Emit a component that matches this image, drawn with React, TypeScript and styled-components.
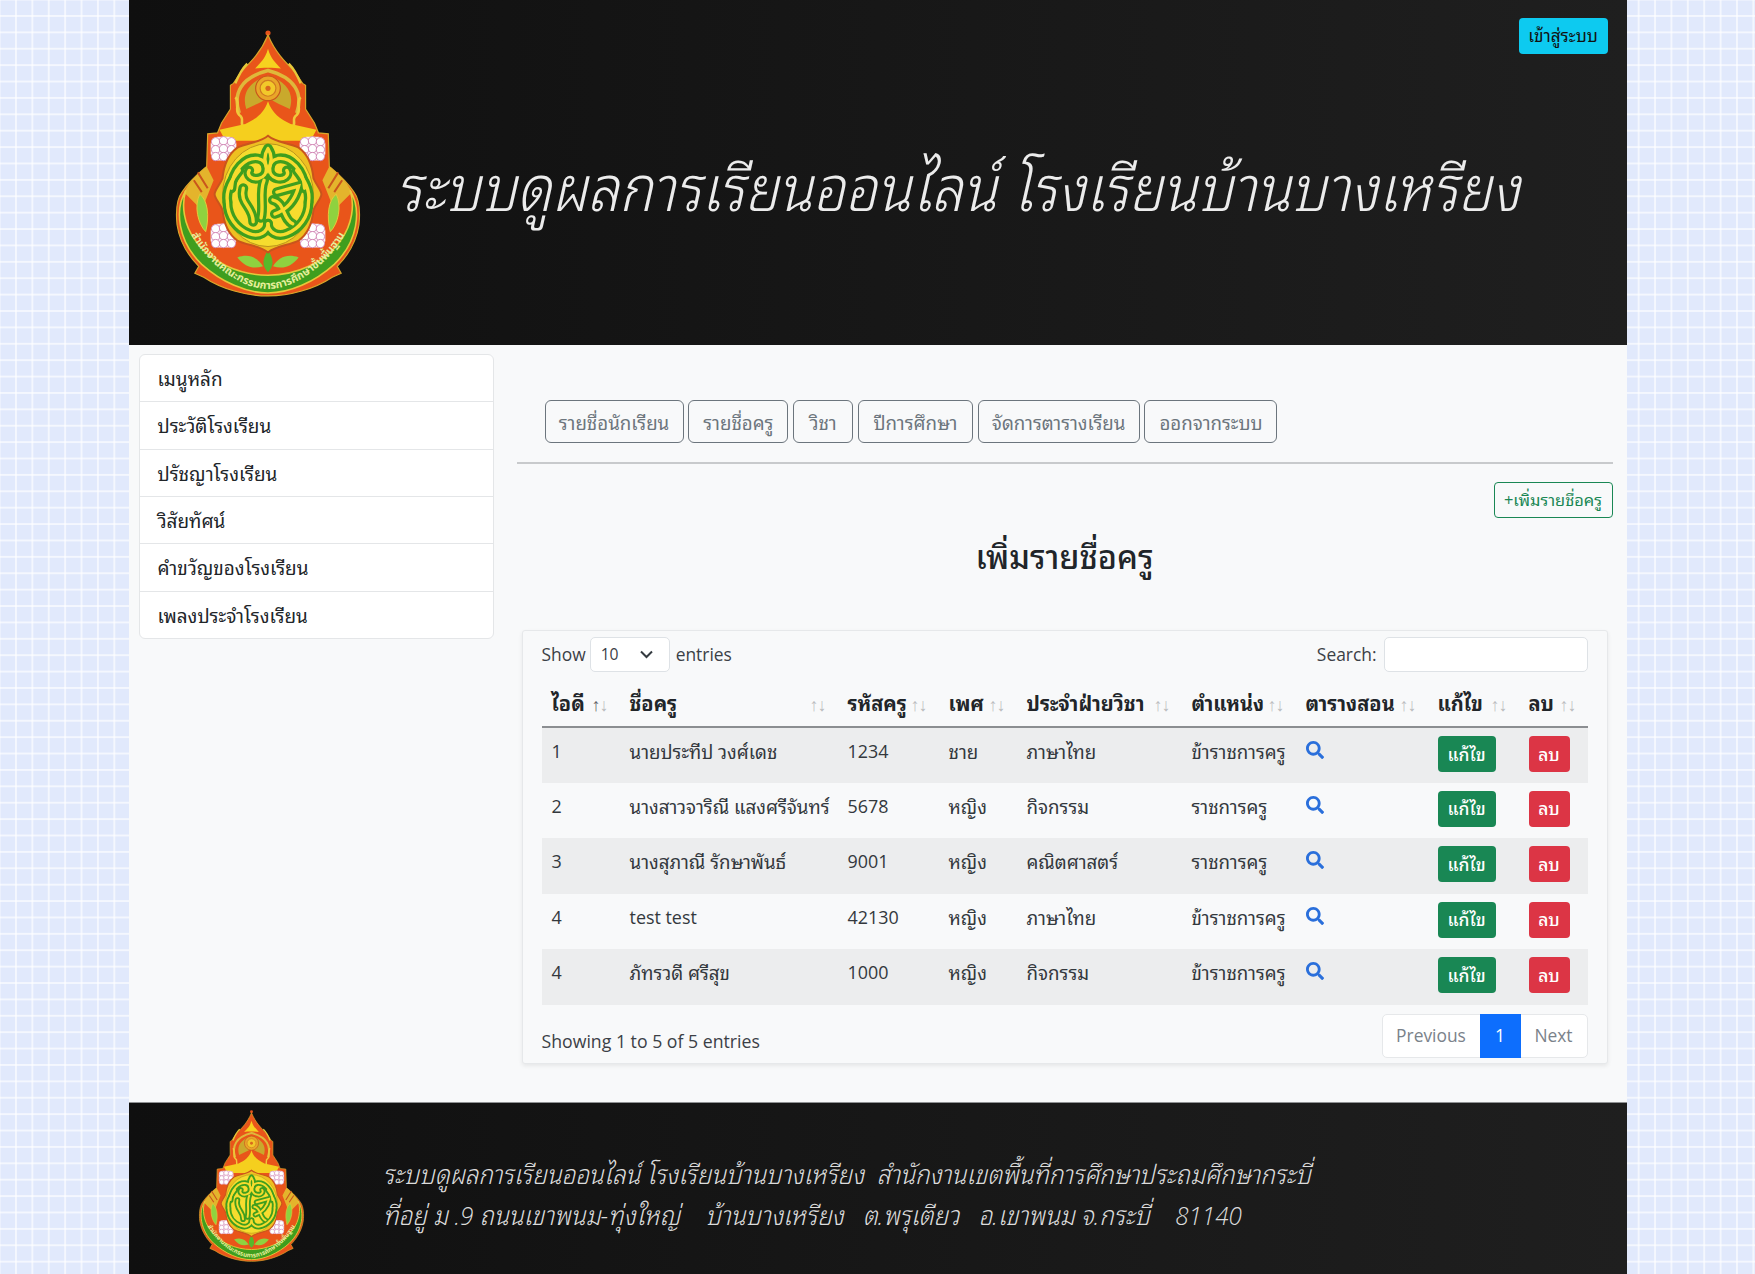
import React from "react";
import styled, { createGlobalStyle } from "styled-components";
import { FaSearch } from "react-icons/fa";

const Global = createGlobalStyle`
  html, body { margin: 0; padding: 0; }
  body {
    background-color: #e1e9fc;
    background-image:
      linear-gradient(to right, rgba(255,255,255,.62) 1.5px, transparent 1.5px),
      linear-gradient(to bottom, rgba(255,255,255,.62) 1.5px, transparent 1.5px);
    background-size: 16.4px 16.4px;
    background-position: 15px 15px;
    font-family: "Open Sans", "Noto Sans Thai Looped", Tahoma, Loma, Garuda, "Noto Sans", "Noto Sans Thai", sans-serif;
    font-size: 17.9px;
    line-height: 1.5;
    color: #212529;
  }
  * { box-sizing: border-box; }
`;

const Page = styled.div`
  width: 1498px;
  height: 1274px;
  margin: 0 auto;
  background: #f8f9fa;
  display: flex;
  flex-direction: column;
  overflow: hidden;
`;

const Banner = styled.header`
  position: relative;
  height: 345px;
  flex: none;
  background: linear-gradient(to right, #0f0f0f, #1f1f1f);
  display: flex;
  align-items: flex-start;
  padding: 30px 0 0 45px;
`;

const BannerTitle = styled.div`
  margin: 113px 0 0 34px;
  font-size: 63px;
  font-weight: 300;
  font-style: italic;
  line-height: 1.4;
  color: #ececec;
  white-space: nowrap;
  transform: scaleX(0.9);
  transform-origin: left center;
`;

const LoginButton = styled.button`
  position: absolute;
  top: 18px;
  right: 19px;
  width: 89px;
  height: 36px;
  padding: 0;
  border: 0;
  border-radius: 4px;
  background: #0dcaf0;
  color: #111;
  font: inherit;
  font-size: 17.2px;
`;

const LogoSvg = styled.svg<{ $w: number }>`
  flex: none;
  display: block;
  width: ${(p) => p.$w}px;
  height: ${(p) => p.$w * 1.42}px;
`;

const Main = styled.main`
  flex: 1;
  display: flex;
  padding: 9px 14px 0 10px;
  gap: 23px;
`;

const Menu = styled.nav`
  width: 355px;
  height: 285px;
  flex: none;
  background: #fff;
  border: 1px solid #e4e6e8;
  border-radius: 6px;
  display: flex;
  flex-direction: column;
`;

const MenuItem = styled.a`
  flex: 1;
  display: flex;
  align-items: center;
  padding: 2px 18px 0;
  color: #212529;
  font-size: 18.9px;
  border-bottom: 1px solid #e4e6e8;
  &:last-child { border-bottom: 0; }
`;

const Content = styled.section`
  flex: 1;
  display: flex;
  flex-direction: column;
  padding-top: 46px;
`;

const NavRow = styled.div`
  display: flex;
  gap: 4.8px;
  padding-left: 28px;
`;

const NavButton = styled.button<{ $w: number }>`
  width: ${(p) => p.$w}px;
  height: 43px;
  padding: 4px 0 0;
  background: transparent;
  border: 1px solid #6c757d;
  border-radius: 6px;
  color: #6c757d;
  font: inherit;
  font-size: 18.7px;
  white-space: nowrap;
`;

const Rule = styled.div`
  height: 2px;
  margin-top: 19px;
  background: #c8cacc;
`;

const AddRow = styled.div`
  display: flex;
  justify-content: flex-end;
  margin-top: 18px;
`;

const AddButton = styled.button`
  width: 119px;
  height: 36px;
  padding: 0;
  background: transparent;
  border: 1px solid #198754;
  border-radius: 4px;
  color: #198754;
  font: inherit;
  font-size: 16.4px;
  white-space: nowrap;
`;

const Title = styled.h3`
  margin: 15px 0 0;
  height: 97px;
  font-size: 32.4px;
  font-weight: 500;
  line-height: 46px;
  text-align: center;
  color: #212529;
`;

const Card = styled.div`
  margin: 0 5px 0 5px;
  height: 434px;
  padding: 6px 19px 0 19px;
  background: #f8f9fa;
  border: 1px solid #e6e8ea;
  border-radius: 3px;
  box-shadow: 0 2px 4px rgba(0,0,0,.075);
`;

const Controls = styled.div`
  display: flex;
  justify-content: space-between;
  align-items: center;
  height: 35px;
`;

const Label = styled.label`
  display: flex;
  align-items: center;
  gap: 4px;
  font-size: 17.4px;
  color: #3b4046;
`;

const SelectBox = styled.div`
  width: 80px;
  height: 35px;
  margin-right: 2px;
  display: flex;
  align-items: center;
  justify-content: space-between;
  padding: 0 16px 0 10px;
  background: #fff;
  border: 1px solid #dee2e6;
  border-radius: 5px;
  font-size: 15.7px;
`;

const SearchBox = styled.input`
  width: 204px;
  height: 35px;
  margin-left: 3px;
  background: #fff;
  border: 1px solid #dee2e6;
  border-radius: 5px;
`;

const Table = styled.table`
  width: 1046px;
  margin-top: 10px;
  table-layout: fixed;
  border-collapse: collapse;
`;

const Col = styled.col<{ $w: number }>`
  width: ${(p) => p.$w}px;
`;

const Th = styled.th<{ $sorted?: boolean }>`
  position: relative;
  height: 45px;
  padding: 0 9px 2px 10px;
  text-align: left;
  font-size: 20px;
  line-height: 27px;
  font-weight: 700;
  border-bottom: 2px solid #8b8e91;
  white-space: nowrap;
  &::before, &::after {
    position: absolute;
    top: 9px;
    font-size: 17.9px;
    font-weight: 400;
  }
  &::before {
    content: "↑";
    right: 19px;
    opacity: ${(p) => (p.$sorted ? 0.7 : 0.28)};
  }
  &::after {
    content: "↓";
    right: 11px;
    opacity: 0.28;
  }
`;

const Tr = styled.tr<{ $striped: boolean }>`
  background: ${(p) => (p.$striped ? "#ecedee" : "transparent")};
`;

const Td = styled.td<{ $thai?: boolean }>`
  height: 55.5px;
  padding: 10px 9px 0 10px;
  vertical-align: top;
  color: #33383d;
  font-size: ${(p) => (p.$thai ? "18.7px" : "17.9px")};
  line-height: 27px;
  white-space: nowrap;
`;

const SearchLink = styled.a`
  display: inline-flex;
  color: #2a6fdb;
  font-size: 18px;
  padding-top: 3px;
`;

const ActionButton = styled.button<{ $bg: string; $w: number }>`
  width: ${(p) => p.$w}px;
  height: 36px;
  padding: 0;
  border: 0;
  border-radius: 4px;
  background: ${(p) => p.$bg};
  color: #fff;
  font: inherit;
  font-size: 17.5px;
  font-weight: 500;
  margin-top: -2px;
  display: block;
`;

const TableFooter = styled.div`
  display: flex;
  justify-content: space-between;
  align-items: flex-start;
  margin-top: 9px;
`;

const Info = styled.div`
  padding-top: 14px;
  font-size: 17.7px;
  color: #3b4046;
`;

const Pager = styled.div`
  display: flex;
  height: 44px;
  background: #fff;
  border: 1px solid #e6e8ea;
  border-radius: 5px;
`;

const PageLink = styled.div<{ $active?: boolean; $w: number }>`
  width: ${(p) => p.$w}px;
  margin: ${(p) => (p.$active ? "-1px 0" : "0")};
  display: flex;
  align-items: center;
  justify-content: center;
  font-size: 17.4px;
  background: ${(p) => (p.$active ? "#0d6efd" : "transparent")};
  color: ${(p) => (p.$active ? "#fff" : "#7a828a")};
`;

const Footer = styled.footer`
  flex: none;
  height: 172px;
  background: linear-gradient(to right, #0f0f0f, #1f1f1f);
  border-top: 1px solid #8f9193;
  display: flex;
  align-items: flex-start;
  padding: 7px 0 0 69px;
`;

const FooterText = styled.div`
  margin: 44px 0 0 78px;
  font-size: 26.5px;
  font-weight: 300;
  font-style: italic;
  line-height: 41px;
  color: #dcdcdc;
  white-space: pre;
  transform: scaleX(0.916);
  transform-origin: left center;
`;

function Lotus({ x, y }: { x: number; y: number }) {
  return (
    <g transform={`translate(${x} ${y})`}>
      <rect x="-13" y="-12" width="26" height="24" rx="7" fill="#f8eef6" />
      {[[-8, -7], [0, -8], [8, -7], [-8, 1], [0, 0], [8, 1], [-8, 8], [0, 8], [8, 8]].map(([a, b], i) => (
        <circle key={i} cx={a} cy={b} r="4.2" fill="#fff" stroke="#cf7fb0" strokeWidth="0.9" />
      ))}
    </g>
  );
}

function Emblem({ w, pathId }: { w: number; pathId: string }) {
  const knot = [
    "M70 168C71 150 84 136 97 138C108 140 108 156 98 158C91 160 85 155 88 150",
    "M144 168C143 150 130 136 117 138C106 140 106 156 116 158C123 160 129 155 126 150",
    "M66 182C66 197 75 209 88 214C98 218 107 212 107 204",
    "M148 182C148 197 139 209 126 214C116 218 107 212 107 204",
    "M82 168C78 184 92 186 92 202",
    "M103 160C98 172 103 186 100 198",
    "M116 172L138 166C134 182 126 190 114 194",
    "M112 180C124 182 122 200 132 204",
    "M78 150C70 160 64 170 66 182",
    "M136 150C144 160 150 170 148 182",
    "M107 128C103 134 103 142 107 150C111 142 111 134 107 128",
  ];
  return (
    <LogoSvg $w={w} viewBox="14 8 186 270" aria-hidden="true">
      <defs>
        <path id={pathId} d="M21 192C26 226 70 270 107 270C144 270 188 226 193 192" />
      </defs>
      <circle cx="107" cy="11" r="2.6" fill="#e8531a" />
      <path
        d="M107 13C100 30 90 40 80 50L72 62L69 64L69 88L60 102L56 112L46 113L45 146C38 152 28 160 20 172C14 180 14 195 15 205C18 225 30 240 37 247L33 254L42 258C60 270 85 277 107 277C129 277 154 270 172 258L181 254L177 247C184 240 196 225 199 205C200 195 200 180 194 172C186 160 176 152 169 146L168 113L158 112L154 102L145 88L145 64L142 62L134 50C124 40 114 30 107 13Z"
        fill="#e9551a"
        stroke="#d8a72a"
        strokeWidth="1.2"
      />
      <path d="M45 146C38 152 28 160 22 172L40 190L52 160Z" fill="#e4b42c" />
      <path d="M169 146C176 152 186 160 192 172L174 190L162 160Z" fill="#e4b42c" />
      <path d="M32 160L40 172M36 152L46 168M182 160L174 172M178 152L168 168" stroke="#c9551c" strokeWidth="2" />
      <path
        d="M24 170C12 190 16 222 40 245C60 263 85 274 107 274C129 274 154 263 174 245C198 222 202 190 190 170C195 185 192 205 181 220C166 243 135 256 107 256C79 256 48 243 33 220C22 205 19 185 24 170Z"
        fill="#3f9e1e"
        stroke="#e7c83a"
        strokeWidth="1.6"
      />
      <text fontFamily="'Noto Sans Thai','Noto Sans',sans-serif" fontSize="11" fontWeight="700" fill="#e6ee9a">
        <textPath href={`#${pathId}`} startOffset="50%" textAnchor="middle">
          สำนักงานคณะกรรมการการศึกษาขั้นพื้นฐาน
        </textPath>
      </text>
      <path d="M38 174C46 180 48 196 44 212C36 204 32 186 38 174Z" fill="#8fd23f" stroke="#e7c83a" />
      <path d="M176 174C168 180 166 196 170 212C178 204 182 186 176 174Z" fill="#8fd23f" stroke="#e7c83a" />
      <path d="M107 230C103 238 99 245 107 253C115 245 111 238 107 230Z" fill="#58b82a" />
      <path d="M76 238C88 234 96 238 102 247C92 250 84 248 76 238Z" fill="#8fd23f" />
      <path d="M138 238C126 234 118 238 112 247C122 250 130 248 138 238Z" fill="#8fd23f" />
      <path d="M107 27C104 38 99 41 94 47C100 46 114 46 120 47C115 41 110 38 107 27Z" fill="#f6d21f" />
      <path d="M86 42C82 46 78 52 74 62M128 42C132 46 136 52 140 62" stroke="#e7c83a" strokeWidth="2.4" fill="none" />
      <path d="M78 92C71 72 80 56 107 49C134 56 143 72 136 92" fill="#e9551a" stroke="#dfb83a" strokeWidth="3.5" />
      <path d="M85 88C80 72 88 60 107 54C126 60 134 72 129 88C122 84 114 82 107 76C100 82 92 84 85 88Z" fill="#c9a92c" />
      <circle cx="107" cy="67" r="12.5" fill="#e9a629" stroke="#c9551c" strokeWidth="1.2" />
      <circle cx="107" cy="67" r="8" fill="#f2c82a" stroke="#cf7a22" strokeWidth="1.2" />
      <circle cx="107" cy="67" r="2.6" fill="#d9671e" />
      <path d="M74 76C80 82 72 88 78 94C84 98 78 102 82 106" stroke="#f0c93a" strokeWidth="2.6" fill="none" />
      <path d="M140 76C134 82 142 88 136 94C130 98 136 102 132 106" stroke="#f0c93a" strokeWidth="2.6" fill="none" />
      <path d="M58 109L84 103C95 98 103 92 107 80C111 92 119 98 130 103L156 109L150 120L64 120Z" fill="#f5cf1e" />
      <Lotus x={62} y={128} />
      <Lotus x={152} y={128} />
      <Lotus x={62} y={216} />
      <Lotus x={152} y={216} />
      <path
        d="M107 115C115 122 128 122 138 127C148 134 152 148 153 158C156 165 161 170 161 174C161 178 156 183 153 190C152 200 148 214 138 221C128 226 115 226 107 233C99 226 86 226 76 221C66 214 62 200 61 190C58 183 53 178 53 174C53 170 58 165 61 158C62 148 66 134 76 127C86 122 99 122 107 115Z"
        fill="#eec021"
        stroke="#c9551c"
        strokeWidth="2"
      />
      <ellipse cx="107" cy="175" rx="46" ry="52" fill="#f6dc2e" stroke="#b9931c" strokeWidth="1" />
      {knot.map((d, i) => (
        <path key={i} d={d} fill="none" stroke="#3f9e1e" strokeWidth="10" strokeLinecap="round" />
      ))}
      {knot.map((d, i) => (
        <path key={`y${i}`} d={d} fill="none" stroke="#f6dc2e" strokeWidth="3.4" strokeLinecap="round" />
      ))}
    </LogoSvg>
  );
}

const menu = ["เมนูหลัก", "ประวัติโรงเรียน", "ปรัชญาโรงเรียน", "วิสัยทัศน์", "คำขวัญของโรงเรียน", "เพลงประจำโรงเรียน"];
const navs: [string, number][] = [
  ["รายชื่อนักเรียน", 139], ["รายชื่อครู", 100], ["วิชา", 60], ["ปีการศึกษา", 115], ["จัดการตารางเรียน", 162], ["ออกจากระบบ", 133],
];
const cols: [string, number][] = [
  ["ไอดี", 78], ["ชื่อครู", 218], ["รหัสครู", 101], ["เพศ", 78], ["ประจำฝ่ายวิชา", 165], ["ตำแหน่ง", 114], ["ตารางสอน", 132], ["แก้ไข", 91], ["ลบ", 69],
];
const rows = [
  ["1", "นายประทีป วงศ์เดช", "1234", "ชาย", "ภาษาไทย", "ข้าราชการครู"],
  ["2", "นางสาวจาริณี แสงศรีจันทร์", "5678", "หญิง", "กิจกรรม", "ราชการครู"],
  ["3", "นางสุภาณี รักษาพันธ์", "9001", "หญิง", "คณิตศาสตร์", "ราชการครู"],
  ["4", "test test", "42130", "หญิง", "ภาษาไทย", "ข้าราชการครู"],
  ["4", "ภัทรวดี ศรีสุข", "1000", "หญิง", "กิจกรรม", "ข้าราชการครู"],
];
const thai = /[\u0E00-\u0E7F]/;

export default function App() {
  return (
    <>
      <Global />
      <Page>
        <Banner>
          <Emblem w={188} pathId="ring-top" />
          <BannerTitle>ระบบดูผลการเรียนออนไลน์ โรงเรียนบ้านบางเหรียง</BannerTitle>
          <LoginButton>เข้าสู่ระบบ</LoginButton>
        </Banner>
        <Main>
          <Menu>
            {menu.map((m) => (
              <MenuItem key={m}>{m}</MenuItem>
            ))}
          </Menu>
          <Content>
            <NavRow>
              {navs.map(([n, w]) => (
                <NavButton key={n} $w={w}>{n}</NavButton>
              ))}
            </NavRow>
            <Rule />
            <AddRow>
              <AddButton>+เพิ่มรายชื่อครู</AddButton>
            </AddRow>
            <Title>เพิ่มรายชื่อครู</Title>
            <Card>
              <Controls>
                <Label>
                  Show
                  <SelectBox>
                    10
                    <svg width="13" height="9" viewBox="0 0 13 9" fill="none" stroke="#343a40" strokeWidth="2">
                      <path d="M1 1.5l5.5 5.5L12 1.5" />
                    </svg>
                  </SelectBox>
                  entries
                </Label>
                <Label>
                  Search:
                  <SearchBox />
                </Label>
              </Controls>
              <Table>
                <colgroup>
                  {cols.map(([c, w]) => (
                    <Col key={c} $w={w} />
                  ))}
                </colgroup>
                <thead>
                  <tr>
                    {cols.map(([c], i) => (
                      <Th key={c} $sorted={i === 0}>{c}</Th>
                    ))}
                  </tr>
                </thead>
                <tbody>
                  {rows.map((r, i) => (
                    <Tr key={i} $striped={i % 2 === 0}>
                      {r.map((v, j) => (
                        <Td key={j} $thai={thai.test(v)}>{v}</Td>
                      ))}
                      <Td>
                        <SearchLink><FaSearch /></SearchLink>
                      </Td>
                      <Td>
                        <ActionButton $bg="#198754" $w={58}>แก้ไข</ActionButton>
                      </Td>
                      <Td>
                        <ActionButton $bg="#dc3545" $w={41}>ลบ</ActionButton>
                      </Td>
                    </Tr>
                  ))}
                </tbody>
              </Table>
              <TableFooter>
                <Info>Showing 1 to 5 of 5 entries</Info>
                <Pager>
                  <PageLink $w={97}>Previous</PageLink>
                  <PageLink $w={41} $active>1</PageLink>
                  <PageLink $w={66}>Next</PageLink>
                </Pager>
              </TableFooter>
            </Card>
          </Content>
        </Main>
        <Footer>
          <Emblem w={107} pathId="ring-bottom" />
          <FooterText>
            {"ระบบดูผลการเรียนออนไลน์ โรงเรียนบ้านบางเหรียง  สำนักงานเขตพื้นที่การศึกษาประถมศึกษากระบี่\nที่อยู่ ม .9 ถนนเขาพนม-ทุ่งใหญ่    บ้านบางเหรียง   ต.พรุเตียว   อ.เขาพนม จ.กระบี่    81140"}
          </FooterText>
        </Footer>
      </Page>
    </>
  );
}
